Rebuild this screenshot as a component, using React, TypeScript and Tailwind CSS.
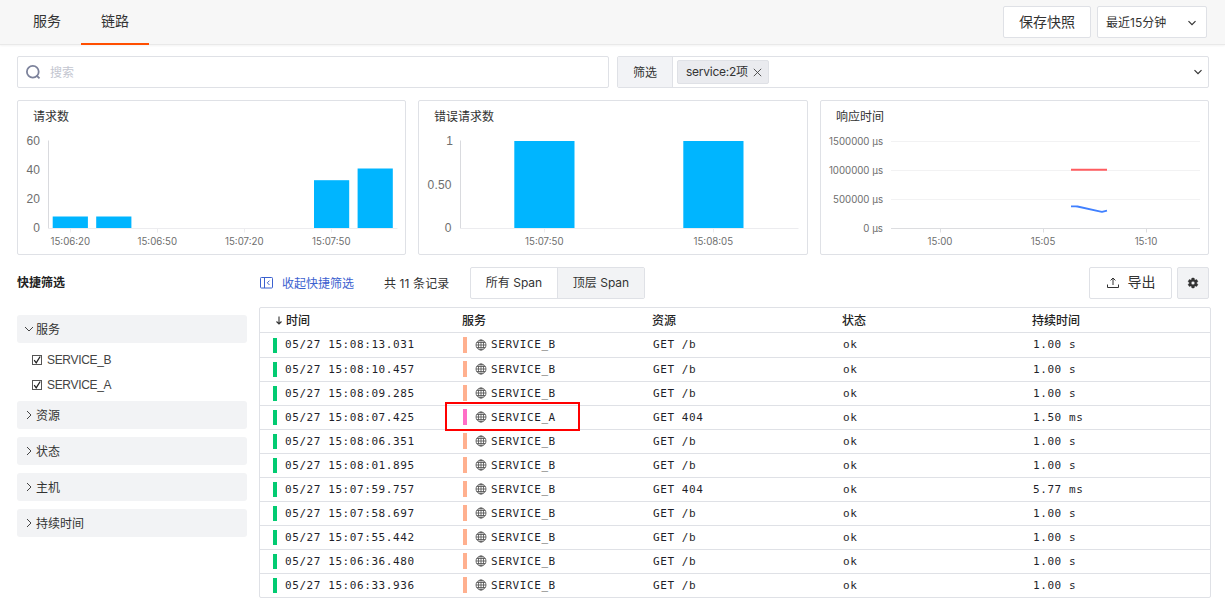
import type { ReactNode } from "react";

const SANS = "font-['Inter','Noto_Sans_CJK_SC',sans-serif]";

type Row = { time: string; service: string; resource: string; duration: string };

const rows: Row[] = [
  { time: "05/27 15:08:13.031", service: "SERVICE_B", resource: "GET /b", duration: "1.00 s" },
  { time: "05/27 15:08:10.457", service: "SERVICE_B", resource: "GET /b", duration: "1.00 s" },
  { time: "05/27 15:08:09.285", service: "SERVICE_B", resource: "GET /b", duration: "1.00 s" },
  { time: "05/27 15:08:07.425", service: "SERVICE_A", resource: "GET 404", duration: "1.50 ms" },
  { time: "05/27 15:08:06.351", service: "SERVICE_B", resource: "GET /b", duration: "1.00 s" },
  { time: "05/27 15:08:01.895", service: "SERVICE_B", resource: "GET /b", duration: "1.00 s" },
  { time: "05/27 15:07:59.757", service: "SERVICE_B", resource: "GET 404", duration: "5.77 ms" },
  { time: "05/27 15:07:58.697", service: "SERVICE_B", resource: "GET /b", duration: "1.00 s" },
  { time: "05/27 15:07:55.442", service: "SERVICE_B", resource: "GET /b", duration: "1.00 s" },
  { time: "05/27 15:06:36.480", service: "SERVICE_B", resource: "GET /b", duration: "1.00 s" },
  { time: "05/27 15:06:33.936", service: "SERVICE_B", resource: "GET /b", duration: "1.00 s" },
];

function ChevronDown({ size = 8 }: { size?: number }) {
  return (
    <svg width={size} height={size} viewBox="0 0 8 8" fill="none" stroke="#333" strokeWidth="1.2" className="shrink-0">
      <path d="M0.5 2.2 4 5.7 7.5 2.2" />
    </svg>
  );
}

function Chevron({ open }: { open?: boolean }) {
  return (
    <svg width="10" height="10" viewBox="0 0 10 10" fill="none" stroke="#444" strokeWidth="1" className="shrink-0">
      <path d={open ? "M1 3 5 7 9 3" : "M3 1 7 5 3 9"} />
    </svg>
  );
}

function Globe() {
  return (
    <svg width="12" height="12" viewBox="0 0 12 12" fill="none" stroke="#4d4d4d" strokeWidth="0.8" className="shrink-0">
      <circle cx="6" cy="6" r="5" />
      <ellipse cx="6" cy="6" rx="2.600" ry="5" />
      <path d="M6 1v10M1 6h10M1.700 3.500h8.600M1.700 8.500h8.600" />
    </svg>
  );
}

function ChartCard({ title, children, viewBox, width }: { title: string; children: ReactNode; viewBox: string; width: number }) {
  return (
    <div className="h-[155px] rounded-xs border border-[#dfe1e6]">
      <div className="h-8 pl-[15px] text-xs leading-8 text-[#333]">{title}</div>
      <svg width={width} height="121" viewBox={viewBox} className="block">
        {children}
      </svg>
    </div>
  );
}

function YLabel({ x, y, children }: { x: number; y: number; children: string }) {
  return (
    <text x={x} y={y} textAnchor="end" className="fill-[#6e6e6e] font-['Liberation_Sans',sans-serif] text-xs tracking-[0.2px]">
      {children}
    </text>
  );
}

function SmallLabel({ x, y, end, children }: { x: number; y: number; end?: boolean; children: string }) {
  return (
    <text x={x} y={y} textAnchor={end ? "end" : "middle"} className="fill-[#6e6e6e] text-[9.7px]">
      {children}
    </text>
  );
}

function RequestChart() {
  return (
    <ChartCard title="请求数" viewBox="18 133 387 121" width={387}>
      <path d="M48.5 140.5V228" stroke="#d9dade" />
      <path d="M48 228.5H397.500M70.500 229v3.500M157.500 229v3.500M244.500 229v3.500M331.500 229v3.500" stroke="#ececef" />
      <g fill="#00b5ff">
        <rect x="52.700" y="216.500" width="35.200" height="11.500" />
        <rect x="96.200" y="216.500" width="35.200" height="11.500" />
        <rect x="314" y="180.200" width="35.200" height="47.800" />
        <rect x="357.600" y="168.500" width="35.200" height="59.500" />
      </g>
      <YLabel x={40.200} y={145}>60</YLabel>
      <YLabel x={40.200} y={174}>40</YLabel>
      <YLabel x={40.200} y={203}>20</YLabel>
      <YLabel x={40.200} y={232}>0</YLabel>
      <SmallLabel x={70.300} y={245}>15:06:20</SmallLabel>
      <SmallLabel x={157.300} y={245}>15:06:50</SmallLabel>
      <SmallLabel x={244.300} y={245}>15:07:20</SmallLabel>
      <SmallLabel x={331.300} y={245}>15:07:50</SmallLabel>
    </ChartCard>
  );
}

function ErrorChart() {
  return (
    <ChartCard title="错误请求数" viewBox="419 133 388 121" width={388}>
      <path d="M460.500 140.500V228" stroke="#d9dade" />
      <path d="M460 228.500H798.500M544.500 229v3.500M713.500 229v3.500" stroke="#ececef" />
      <g fill="#00b5ff">
        <rect x="514.300" y="141" width="60.200" height="87" />
        <rect x="683.300" y="141" width="60.200" height="87" />
      </g>
      <YLabel x={453} y={145}>1</YLabel>
      <YLabel x={451.700} y={189}>0.50</YLabel>
      <YLabel x={451.700} y={232}>0</YLabel>
      <SmallLabel x={544.300} y={245}>15:07:50</SmallLabel>
      <SmallLabel x={713.300} y={245}>15:08:05</SmallLabel>
    </ChartCard>
  );
}

function LatencyChart() {
  return (
    <ChartCard title="响应时间" viewBox="821 133 387 121" width={387}>
      <path d="M891 141.500H1200M891 170.500H1200M891 199.500H1200" stroke="#f2f2f3" />
      <path d="M891 228.500H1200M940.500 229v3.500M1043.500 229v3.500M1146.500 229v3.500" stroke="#dcdde0" />
      <path d="M1071 169.700H1107" stroke="#ff5c60" strokeWidth="2" />
      <path d="M1071 206.300h4.500l2 0.200 22 4.800 2.500 0.600 5 -1.200" stroke="#4080ff" strokeWidth="1.800" fill="none" strokeLinejoin="round" />
      <SmallLabel end x={883} y={145}>1500000 µs</SmallLabel>
      <SmallLabel end x={883} y={174}>1000000 µs</SmallLabel>
      <SmallLabel end x={883} y={203}>500000 µs</SmallLabel>
      <SmallLabel end x={883} y={232}>0 µs</SmallLabel>
      <SmallLabel x={940} y={245}>15:00</SmallLabel>
      <SmallLabel x={1043} y={245}>15:05</SmallLabel>
      <SmallLabel x={1146} y={245}>15:10</SmallLabel>
    </ChartCard>
  );
}

function FilterGroup({ label, open }: { label: string; open?: boolean }) {
  return (
    <div className="flex h-7 items-center gap-[2px] rounded-[3px] bg-[#f2f3f5] pl-[7px] text-xs text-[#333]">
      <Chevron open={open} />
      <span className="pt-px">{label}</span>
    </div>
  );
}

function FilterOption({ label }: { label: string }) {
  return (
    <div className="flex h-[25px] items-center gap-[5px] pl-[15px] text-xs text-[#444]">
      <svg width="10" height="10" viewBox="0 0 10 10" fill="none" className="shrink-0">
        <rect x="0.500" y="0.500" width="9" height="9" stroke="#555" />
        <path d="M2.200 5.200 4.200 7.800 8.200 1.500" stroke="#222" strokeWidth="1.300" />
      </svg>
      <span className="font-['Liberation_Sans',sans-serif] tracking-[-0.33px]">{label}</span>
    </div>
  );
}

function Sidebar() {
  return (
    <aside className="w-[230px] shrink-0">
      <div className="h-8 text-xs leading-8 font-bold text-[#222]">快捷筛选</div>
      <div className="mt-4">
        <FilterGroup label="服务" open />
        <div className="pt-1 pb-1">
          <FilterOption label="SERVICE_B" />
          <FilterOption label="SERVICE_A" />
        </div>
      </div>
      <div className="flex flex-col gap-2">
        <FilterGroup label="资源" />
        <FilterGroup label="状态" />
        <FilterGroup label="主机" />
        <FilterGroup label="持续时间" />
      </div>
    </aside>
  );
}

function Toolbar() {
  return (
    <div className="flex h-8 items-center pr-[2px] text-xs text-[#333]">
      <div className="flex items-center gap-[9px] pl-px text-[#3b61cf]">
        <svg width="13" height="12" viewBox="0 0 13 12" fill="none" stroke="currentColor" strokeWidth="1">
          <rect x="0.500" y="0.500" width="12" height="10.500" rx="0.800" />
          <path d="M4.500 0.500V11M9.500 3.600 7.300 5.800 9.500 8" />
        </svg>
        <span className="pt-px">收起快捷筛选</span>
      </div>
      <span className="ml-[30px] w-[86px] pt-px tracking-[0.1px] whitespace-nowrap">共 11 条记录</span>
      <div className="flex h-8 w-[175px] overflow-hidden rounded-xs border border-[#dfe1e6]">
        <span className="flex flex-1 items-center justify-center">所有 Span</span>
        <span className="flex flex-1 items-center justify-center border-l border-[#dfe1e6] bg-[#f2f3f5]">顶层 Span</span>
      </div>
      <div className="ml-auto flex h-8 w-[83px] items-center justify-center gap-[9px] rounded-xs border border-[#dfe1e6] pl-px text-sm">
        <svg width="12" height="12" viewBox="0 0 12 12" fill="none" stroke="#333" strokeWidth="1">
          <path d="M0.500 7.500v3h11v-3M6 8V1.200M3.600 3.400 6 1l2.400 2.400" />
        </svg>
        <span className="-mt-[2px]">导出</span>
      </div>
      <div className="ml-[5px] flex size-8 items-center justify-center rounded-xs border border-[#dfe1e6] bg-[#f2f3f5]">
        <svg width="12" height="12" viewBox="0 0 24 24" fill="#333">
          <path d="M19.430 12.980c.04-.32.07-.64.07-.98s-.03-.66-.07-.98l2.110-1.650c.19-.15.240-.42.120-.64l-2-3.460c-.12-.22-.39-.3-.61-.22l-2.490 1c-.52-.4-1.080-.73-1.690-.98l-.38-2.650C14.460 2.180 14.250 2 14 2h-4c-.25 0-.46.180-.49.420l-.38 2.650c-.61.250-1.170.590-1.690.980l-2.490-1c-.23-.09-.49 0-.61.220l-2 3.460c-.13.220-.07.490.120.640l2.110 1.650c-.04.320-.07.650-.07.980s.03.660.070.980l-2.110 1.650c-.19.150-.24.420-.12.640l2 3.460c.12.220.39.300.61.220l2.490-1c.52.400 1.080.730 1.690.980l.38 2.650c.03.240.24.420.49.420h4c.25 0 .46-.18.49-.42l.38-2.650c.61-.25 1.170-.59 1.690-.98l2.490 1c.23.090.49 0 .61-.22l2-3.460c.12-.22.07-.49-.12-.64l-2.110-1.650zM12 15.500c-1.930 0-3.500-1.570-3.500-3.500s1.570-3.500 3.500-3.500 3.500 1.570 3.500 3.500-1.570 3.500-3.500 3.500z" stroke="#333" strokeWidth="0.800" />
        </svg>
      </div>
    </div>
  );
}

const GRID = "grid grid-cols-[202px_190px_190px_190px_1fr]";

function TraceTable() {
  return (
    <div className="mt-2 rounded-xs border border-[#dfe1e6]">
      <div className={`${GRID} h-[25px] items-center border-b border-[#dfe1e6] pt-px text-xs font-medium text-[#222]`}>
        <span className="flex items-center gap-[3px] pl-[15px]">
          <svg width="8" height="9" viewBox="0 0 8 9" fill="none" stroke="#333" strokeWidth="1.100">
            <path d="M4 0.500V8M1.500 5.500 4 8l2.500-2.500" />
          </svg>
          时间
        </span>
        <span>服务</span>
        <span>资源</span>
        <span>状态</span>
        <span>持续时间</span>
      </div>
      {rows.map((r, i) => {
        const cell = i === 0 ? "-mt-px pl-px" : "mt-px pl-px";
        return (
          <div
            key={r.time}
            className={`${GRID} ${i === 0 ? "h-[25px]" : i === rows.length - 1 ? "h-[23px]" : "h-6"} items-center font-['DejaVu_Sans_Mono','Liberation_Mono',monospace] text-[11px] leading-4 tracking-[0.578px] text-[#1f1f2b] ${i < rows.length - 1 ? "border-b border-[#dfe1e6]" : ""}`}
          >
            <span className="flex items-center gap-2 pl-[13px]">
              <i className="h-[15px] w-1 bg-[#02cb72]" />
              <span className={i === 0 ? "-mt-px" : "-mb-px"}>{r.time}</span>
            </span>
            <span className="relative -mt-px flex items-center pl-px">
              <i className={`h-4 w-1 ${r.service === "SERVICE_A" ? "bg-[#ff6ec7]" : "bg-[#ffb08f]"}`} />
              <span className="ml-2 flex items-center gap-1">
                <Globe />
                <span className={i === 0 ? "" : "mt-px -mb-px"}>{r.service}</span>
              </span>
              {r.service === "SERVICE_A" && (
                <span className="absolute -top-[7px] -left-[17px] h-[29px] w-[135px] border-2 border-[#ff0000]" />
              )}
            </span>
            <span className={cell}>{r.resource}</span>
            <span className={cell}>ok</span>
            <span className={cell}>{r.duration}</span>
          </div>
        );
      })}
    </div>
  );
}

export default function App() {
  return (
    <div lang="zh-CN" className={`${SANS} h-[610px] w-[1225px] overflow-hidden bg-white`}>
      <header className="flex h-[45px] items-start border-b border-[#e9e9e9] bg-[#f7f7f7] pr-[18px] pl-[13px] text-sm text-[#333] shadow-[0_1px_2px_rgba(0,0,0,0.05)]">
        <div className="flex h-[45px] w-[68px] justify-center pt-[11px] leading-5">服务</div>
        <div className="flex h-[45px] w-[68px] justify-center border-b-2 border-[#ff4e00] pt-[11px] leading-5">链路</div>
        <div className="mt-[6px] ml-auto flex h-8 w-[88px] items-center justify-center rounded-xs border border-[#dfe1e6] bg-white">保存快照</div>
        <div className="mt-[6px] ml-[6px] flex h-8 w-[110px] items-center justify-between rounded-xs border border-[#dfe1e6] bg-white pt-px pr-[10px] pl-2 text-xs">
          <span>最近15分钟</span>
          <ChevronDown />
        </div>
      </header>

      <div className="mt-[11px] flex gap-2 pl-[17px] text-xs text-[#333]">
        <div className="flex h-8 w-[592px] items-center gap-[9px] rounded-xs border border-[#dfe1e6] pl-2 text-[#c3c6d0]">
          <svg width="15" height="15" viewBox="0 0 15 15" fill="none" stroke="#7c829b" strokeWidth="1.800">
            <circle cx="6.800" cy="6.800" r="5.900" />
            <path d="M10.500 10.500 13.500 13.300" />
          </svg>
          <span className="pt-px">搜索</span>
        </div>
        <div className="flex h-8 w-[592px] items-center rounded-xs border border-[#dfe1e6] pr-[6px]">
          <span className="flex h-full w-[55px] items-center justify-center border-r border-[#dfe1e6] bg-[#f2f3f6] pt-px">筛选</span>
          <span className="ml-1 flex h-6 w-[92px] items-center justify-between rounded-xs border border-[#dfe1e6] bg-[#eaebef] pr-[6px] pl-2 whitespace-nowrap">
            <span className="tracking-[-0.25px]">service:2项</span>
            <svg width="9" height="9" viewBox="0 0 9 9" stroke="#444" strokeWidth="0.900">
              <path d="M0.800 0.800 8.200 8.200M8.200 0.800 0.800 8.200" />
            </svg>
          </span>
          <span className="ml-auto">
            <ChevronDown />
          </span>
        </div>
      </div>

      <div className="mt-3 grid grid-cols-[389px_390px_389px] gap-3 pl-[17px]">
        <RequestChart />
        <ErrorChart />
        <LatencyChart />
      </div>

      <div className="mt-3 flex gap-3 pl-[17px]">
        <Sidebar />
        <main className="w-[952px]">
          <Toolbar />
          <TraceTable />
        </main>
      </div>
    </div>
  );
}
